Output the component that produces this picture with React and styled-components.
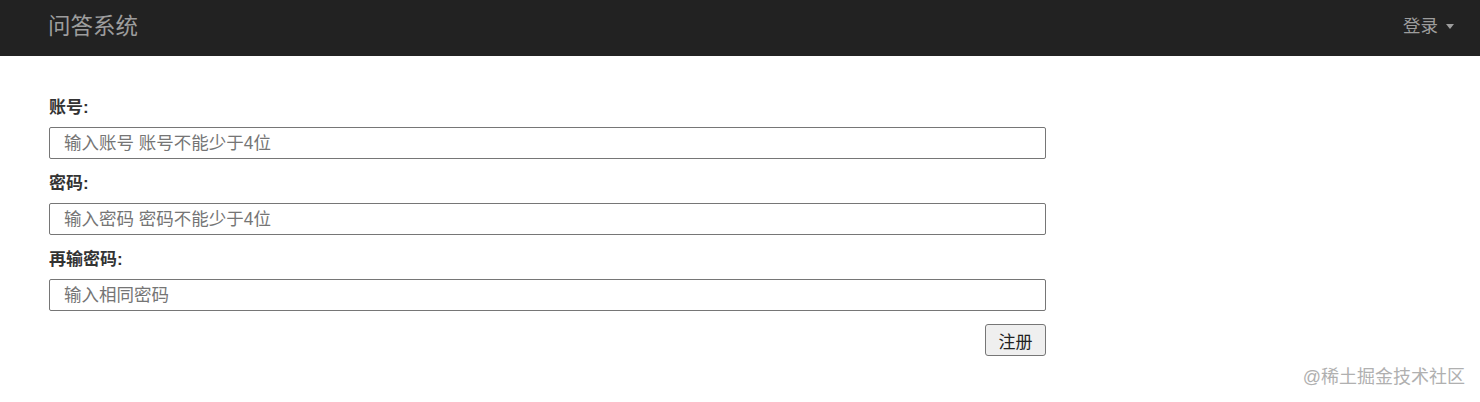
import { Fragment } from "react";
import styled, { createGlobalStyle } from "styled-components";

const GlobalStyle = createGlobalStyle`
  html, body {
    margin: 0;
    padding: 0;
    background: #fff;
    font-family: "Liberation Sans", "Noto Sans CJK SC", sans-serif;
  }
  * { box-sizing: border-box; }
`;

const Page = styled.div`
  position: relative;
  width: 1480px;
  height: 402px;
  overflow: hidden;
  background: #fff;
`;

const Navbar = styled.nav`
  height: 56px;
  background: #222;
  display: flex;
  align-items: center;
  justify-content: space-between;
  padding: 0 26px 0 48px;
`;

const Brand = styled.div`
  font-size: 22.5px;
  color: #9d9d9d;
  margin-top: -8px;
`;

const UserMenu = styled.div`
  display: flex;
  align-items: center;
  gap: 8px;
  font-size: 17.5px;
  color: #9d9d9d;
  margin-top: -7px;
`;

const Caret = styled.span`
  width: 0;
  height: 0;
  border-left: 4px solid transparent;
  border-right: 4px solid transparent;
  border-top: 5px solid #9d9d9d;
  margin-top: 3px;
`;

const Form = styled.form`
  width: 1046px;
  padding: 40px 0 0 49px;
  display: flex;
  flex-direction: column;
`;

const Label = styled.label`
  font-size: 17px;
  line-height: 24px;
  font-weight: bold;
  color: #333;
  margin-bottom: 7px;
`;

const Input = styled.input`
  height: 32px;
  width: 100%;
  border: 1px solid #767676;
  border-radius: 2px;
  padding: 0 14px;
  font-size: 17.5px;
  font-family: "Liberation Sans", "Noto Sans CJK SC", sans-serif;
  color: #333;
  margin-bottom: 13px;
  outline: none;
  &::placeholder { color: #757575; }
`;

const Actions = styled.div`
  display: flex;
  justify-content: flex-end;
`;

const Button = styled.button`
  height: 32px;
  width: 61px;
  font-size: 17px;
  font-family: "Liberation Sans", "Noto Sans CJK SC", sans-serif;
  color: #222;
  background: #efefef;
  border: 1px solid #767676;
  border-radius: 3px;
  padding: 0;
`;

const Watermark = styled.div`
  position: absolute;
  right: 15px;
  bottom: 14px;
  font-size: 18px;
  color: #b0b0b0;
`;

const fields = [
  { label: "账号:", placeholder: "输入账号 账号不能少于4位", type: "text" },
  { label: "密码:", placeholder: "输入密码 密码不能少于4位", type: "password" },
  { label: "再输密码:", placeholder: "输入相同密码", type: "password" },
];

export default function App() {
  return (
    <Page>
      <GlobalStyle />
      <Navbar>
        <Brand>问答系统</Brand>
        <UserMenu>
          登录
          <Caret />
        </UserMenu>
      </Navbar>
      <Form onSubmit={(e) => e.preventDefault()}>
        {fields.map((f) => (
          <Fragment key={f.label}>
            <Label>{f.label}</Label>
            <Input type={f.type} placeholder={f.placeholder} />
          </Fragment>
        ))}
        <Actions>
          <Button type="submit">注册</Button>
        </Actions>
      </Form>
      <Watermark>@稀土掘金技术社区</Watermark>
    </Page>
  );
}
